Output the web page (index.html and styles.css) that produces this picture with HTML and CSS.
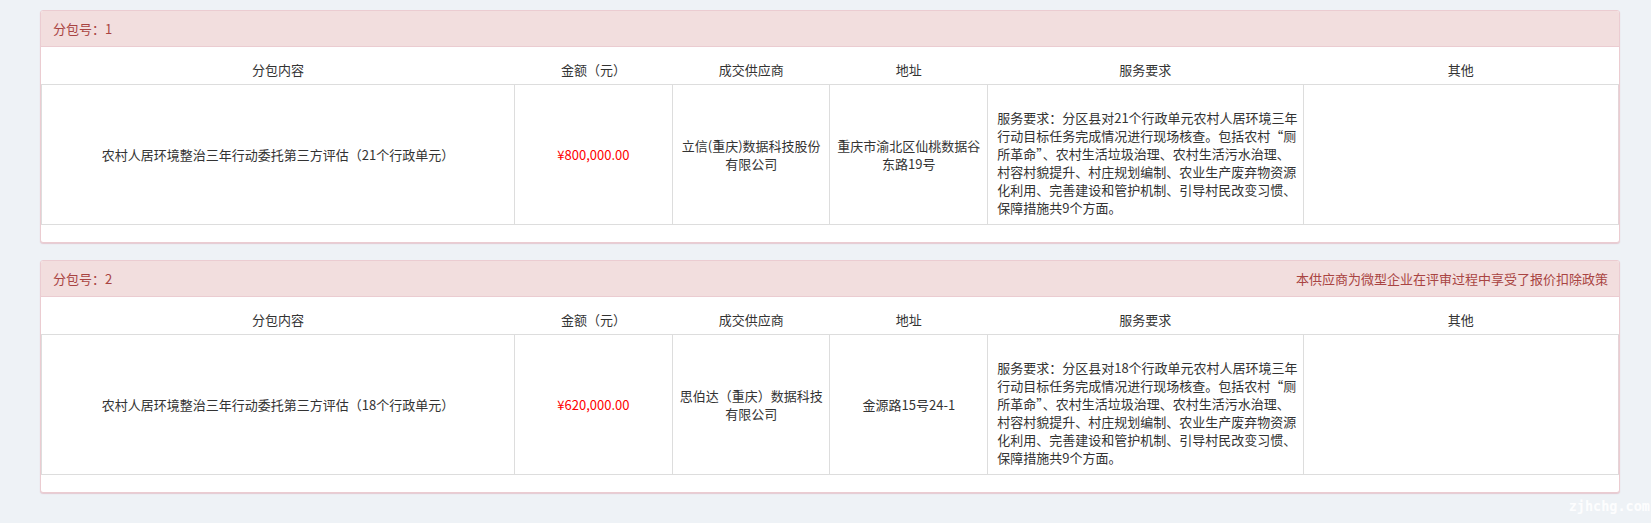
FILE: index.html
```html
<!DOCTYPE html>
<html lang="zh-CN">
<head>
<meta charset="utf-8">
<title>分包信息</title>
<link rel="stylesheet" href="styles.css">
</head>
<body>
<div class="page">
  <section class="panel">
    <div class="panel-heading">
      <span>分包号：1</span>
    </div>
    <div class="panel-body">
      <table class="pkg">
        <colgroup>
          <col class="c-wide"><col class="c-narrow"><col class="c-narrow"><col class="c-narrow"><col class="c-mid"><col class="c-mid">
        </colgroup>
        <thead>
          <tr><th>分包内容</th><th>金额（元）</th><th>成交供应商</th><th>地址</th><th>服务要求</th><th>其他</th></tr>
        </thead>
        <tbody>
          <tr>
            <td>农村人居环境整治三年行动委托第三方评估（21个行政单元）</td>
            <td class="price">¥800,000.00</td>
            <td>立信(重庆)数据科技股份有限公司</td>
            <td>重庆市渝北区仙桃数据谷东路19号</td>
            <td class="svc">服务要求：分区县对21个行政单元农村人居环境三年行动目标任务完成情况进行现场核查。包括农村“厕所革命”、农村生活垃圾治理、农村生活污水治理、村容村貌提升、村庄规划编制、农业生产废弃物资源化利用、完善建设和管护机制、引导村民改变习惯、保障措施共9个方面。</td>
            <td></td>
          </tr>
        </tbody>
      </table>
    </div>
  </section>

  <section class="panel">
    <div class="panel-heading">
      <span>分包号：2</span>
      <span>本供应商为微型企业在评审过程中享受了报价扣除政策</span>
    </div>
    <div class="panel-body">
      <table class="pkg">
        <colgroup>
          <col class="c-wide"><col class="c-narrow"><col class="c-narrow"><col class="c-narrow"><col class="c-mid"><col class="c-mid">
        </colgroup>
        <thead>
          <tr><th>分包内容</th><th>金额（元）</th><th>成交供应商</th><th>地址</th><th>服务要求</th><th>其他</th></tr>
        </thead>
        <tbody>
          <tr>
            <td>农村人居环境整治三年行动委托第三方评估（18个行政单元）</td>
            <td class="price">¥620,000.00</td>
            <td>思伯达（重庆）数据科技有限公司</td>
            <td>金源路15号24-1</td>
            <td class="svc">服务要求：分区县对18个行政单元农村人居环境三年行动目标任务完成情况进行现场核查。包括农村“厕所革命”、农村生活垃圾治理、农村生活污水治理、村容村貌提升、村庄规划编制、农业生产废弃物资源化利用、完善建设和管护机制、引导村民改变习惯、保障措施共9个方面。</td>
            <td></td>
          </tr>
        </tbody>
      </table>
    </div>
  </section>

  <div class="watermark">zjhchg.com</div>
</div>
</body>
</html>
```

FILE: styles.css
```css
* { box-sizing: border-box; }
html, body {
  margin: 0;
  padding: 0;
  background: #eef2f6;
}
body {
  font-family: "Noto Sans CJK SC", "Noto Sans", sans-serif;
  font-size: 13px;
  color: #333;
  overflow: hidden;
  height: 523px;
}
.page {
  position: relative;
  height: 523px;
  padding: 10px 31px 0 40px;
}
.panel {
  background: #fff;
  border: 1px solid #ebccd1;
  border-radius: 3px;
  box-shadow: 0 1px 1px rgba(220, 170, 180, 0.55);
  margin-bottom: 17px;
}
.panel-heading {
  display: flex;
  justify-content: space-between;
  align-items: center;
  padding: 9px 11px 8px 12px;
  line-height: 18px;
  background: #f2dede;
  color: #a94442;
  border-bottom: 1px solid #ebccd1;
  border-radius: 2px 2px 0 0;
}
.panel-body {
  padding: 0 0 17px 0;
}
.pkg {
  width: 100%;
  table-layout: fixed;
  border-collapse: collapse;
  border-spacing: 0;
}
.c-wide { width: 30%; }
.c-narrow { width: 10%; }
.c-mid { width: 20%; }
.pkg th {
  font-weight: normal;
  text-align: center;
  padding: 14px 6px 5px;
  line-height: 18px;
  border-bottom: 1px solid #ddd;
}
.pkg td {
  text-align: center;
  vertical-align: middle;
  padding: 6px;
  line-height: 18px;
  border: 1px solid #ddd;
}
.pkg td:last-child { border-right-color: #e4d4d8; }
.pkg td.price { color: #f00; }
.pkg td.svc {
  text-align: left;
  padding: 24px 3px 7px 9px;
}
.watermark {
  position: absolute;
  right: 1px;
  bottom: 9px;
  font-family: "DejaVu Sans Mono", "Liberation Mono", monospace;
  font-weight: bold;
  font-size: 13.5px;
  line-height: 16px;
  color: rgba(255, 255, 255, 0.92);
}
```
